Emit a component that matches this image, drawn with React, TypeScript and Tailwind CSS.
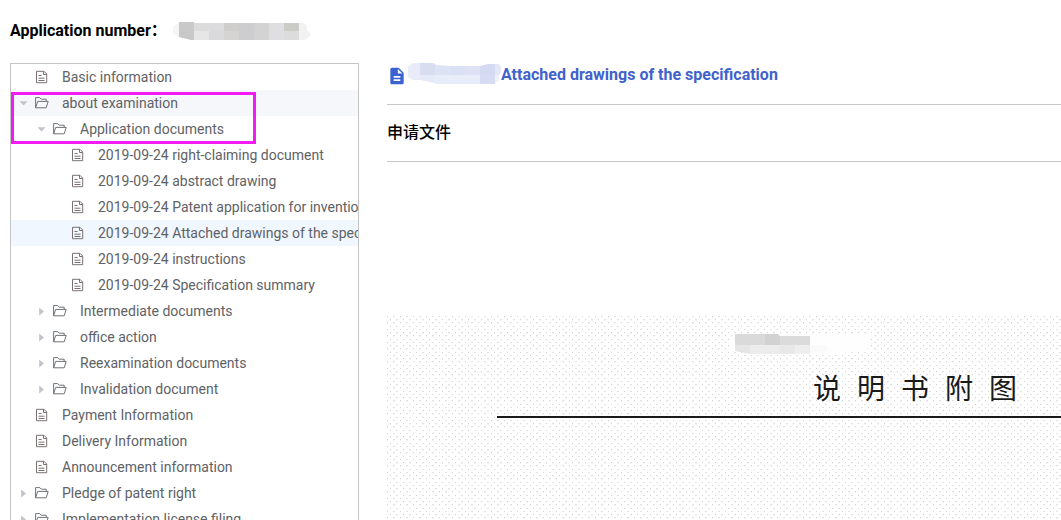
import clsx from "clsx";
import { useState } from "react";
import { MdDescription } from "react-icons/md";

interface TreeNode {
  id: string;
  label: string;
  children?: TreeNode[];
}

const TREE: TreeNode[] = [
  { id: "basic", label: "Basic information" },
  {
    id: "examination",
    label: "about examination",
    children: [
      {
        id: "application",
        label: "Application documents",
        children: [
          { id: "claims", label: "2019-09-24 right-claiming document" },
          { id: "abstract", label: "2019-09-24 abstract drawing" },
          { id: "patent", label: "2019-09-24 Patent application for invention" },
          {
            id: "drawings",
            label: "2019-09-24 Attached drawings of the specification",
          },
          { id: "instructions", label: "2019-09-24 instructions" },
          { id: "summary", label: "2019-09-24 Specification summary" },
        ],
      },
      { id: "intermediate", label: "Intermediate documents", children: [] },
      { id: "office", label: "office action", children: [] },
      { id: "reexamination", label: "Reexamination documents", children: [] },
      { id: "invalidation", label: "Invalidation document", children: [] },
    ],
  },
  { id: "payment", label: "Payment Information" },
  { id: "delivery", label: "Delivery Information" },
  { id: "announcement", label: "Announcement information" },
  { id: "pledge", label: "Pledge of patent right", children: [] },
  { id: "license", label: "Implementation license filing", children: [] },
];

const INDENTS = ["pl-0", "pl-[18px]", "pl-9"];

function DocumentIcon() {
  return (
    <svg
      viewBox="0 0 14 14"
      className="size-3.5 shrink-0"
      fill="none"
      stroke="#7a7072"
      aria-hidden="true"
    >
      <path d="M1.5 1.3H9L11.7 4V12.7H1.5Z" />
      <path d="M8.5 1.3V4.5H11.7M3.5 5.5H6.5M3.5 8.2H9.5M3.5 10.5H9.5" />
    </svg>
  );
}

function FolderIcon() {
  return (
    <svg
      viewBox="0 0 14 14"
      className="size-3.5 shrink-0"
      fill="none"
      stroke="#6f7378"
      strokeLinejoin="round"
      aria-hidden="true"
    >
      <path d="M0.6 11.8V1.6H4.8L6.3 3.2H11.2V5.4" />
      <path d="M0.6 11.8L2.7 5.4H13.2L11.2 11.8Z" />
    </svg>
  );
}

function Caret({ open }: { open: boolean }) {
  return (
    <svg viewBox="0 0 24 24" className="size-6 shrink-0" aria-hidden="true">
      <path
        d={open ? "M8.5 10.2H16.5L12.5 14.6Z" : "M10.2 8.5V16.5L15 12.5Z"}
        fill="#c0c4cc"
      />
    </svg>
  );
}

interface TreeItemProps {
  node: TreeNode;
  level: number;
  openIds: string[];
  selected: string;
  onPick: (node: TreeNode) => void;
}

function TreeItem({ node, level, openIds, selected, onPick }: TreeItemProps) {
  const open = openIds.includes(node.id);

  return (
    <li>
      <button
        type="button"
        onClick={() => onPick(node)}
        aria-expanded={node.children ? open : undefined}
        className={clsx(
          "flex h-[26px] w-full items-center whitespace-nowrap text-left text-sm text-[#606266]",
          level < 3 ? INDENTS[level] : "pl-[54px]",
          node.id === selected && "bg-[#f0f7ff]",
          node.id === "examination" && "bg-[#f5f7fa]",
        )}
      >
        {node.children ? (
          <Caret open={open} />
        ) : (
          <span className="w-6 shrink-0" />
        )}
        {node.children ? <FolderIcon /> : <DocumentIcon />}
        <span className="ml-[13px]">{node.label}</span>
      </button>
      {open && node.children && (
        <ul>
          {node.children.map((child) => (
            <TreeItem
              key={child.id}
              node={child}
              level={level + 1}
              openIds={openIds}
              selected={selected}
              onPick={onPick}
            />
          ))}
        </ul>
      )}
    </li>
  );
}

// Masked application number
function NumberMask() {
  const top = ["#c9c9c9", "#dcdcdc", "#dcdcde", "#cfcecd", "#cdccce", "#d3d2d2", "#dfdfe1", "#cbccc8"];
  const bottom = ["#c8c8c8", "#e7e6e7", "#dad9dc", "#d5d4d3", "#cdccce", "#d4d3d3", "#dfdee2", "#dcdcdc"];
  return (
    <svg viewBox="0 0 138 19" className="h-[19px] w-[138px]" aria-hidden="true">
      <path d="M7 0.5L1 5V12L7 15Z" fill="#f5f5f5" />
      <path d="M127 1H132L135 4V9L138 10V14L133 18H127Z" fill="#f1f2f2" />
      <clipPath id="number-mask">
        <path d="M7 0H22V1H127V18H19L7 15Z" />
      </clipPath>
      <g clipPath="url(#number-mask)">
        {top.map((fill, i) => (
          <rect key={i} x={7 + i * 15} y="0" width="15" height="9" fill={fill} />
        ))}
        {bottom.map((fill, i) => (
          <rect key={i} x={7 + i * 15} y="9" width="15" height="10" fill={fill} />
        ))}
      </g>
    </svg>
  );
}

function TitleMask() {
  return (
    <svg viewBox="-1 0 94 22" className="h-[22px] w-[94px]" aria-hidden="true">
      <path d="M12 0H5L0 4V14L5 17H12Z" fill="#e9ecf8" />
      <path d="M12 0H25L30 3V12H12Z" fill="#d8ddf2" />
      <path d="M27 2L42 3V12H27Z" fill="#dde2f5" />
      <path d="M42 3H57V12H42Z" fill="#d9e2f5" />
      <path d="M57 3H72V12H57Z" fill="#dfe2f5" />
      <path d="M72 3L80 1H87V12H72Z" fill="#d5daf3" />
      <path d="M87 1H91L94 5V9L91 12H87Z" fill="#e3e7f6" />
      <path d="M12 12H27V20L12 17Z" fill="#e6e9f7" />
      <path d="M27 12H72V21H27Z" fill="#e9edf9" />
      <path d="M72 12H87V21H72Z" fill="#d8dcf3" />
      <path d="M87 12H91V18L87 20Z" fill="#eef0fa" />
    </svg>
  );
}

function ScanMask() {
  return (
    <svg viewBox="0 0 143 20" className="h-5 w-[143px]" aria-hidden="true">
      <path d="M7 0L2 4V15L20 20H95L143 17V0Z" fill="#fefefe" />
      <path d="M7 0H37V11H7Z" fill="#dadada" />
      <path d="M37 0H50L52 2V11H37Z" fill="#d2d2d2" />
      <path d="M52 2H82V11H52Z" fill="#dbdbdb" />
      <path d="M7 11H22V20L7 17Z" fill="#e5e5e5" />
      <path d="M22 11H52V20H22Z" fill="#ececec" />
      <path d="M52 11H67V20H52Z" fill="#e8e8e8" />
      <path d="M67 11H82V20H67Z" fill="#eeeeee" />
      <path d="M82 11H98L100 16L96 19H82Z" fill="#fafafa" />
    </svg>
  );
}

// Halftone grain of the scanned sheet
function Halftone() {
  return (
    <svg className="absolute inset-0 size-full" aria-hidden="true">
      <pattern id="halftone" width="13" height="13" patternUnits="userSpaceOnUse">
        <path d="M0 0H1V1H0ZM3 3H4V4H3ZM0 6H1V7H0ZM3 10H4V11H3Z" fill="#d2d2d2" />
        <path d="M6 0H8V1H6ZM9 3H11V4H9ZM6 6H8V7H6ZM9 10H11V11H9Z" fill="#e2e2e2" />
        <path d="M3 4H4V5H3ZM9 4H11V5H9ZM0 7H1V8H0ZM6 7H8V8H6Z" fill="#f4f4f4" />
      </pattern>
      <rect width="100%" height="100%" fill="url(#halftone)" />
    </svg>
  );
}

export default function App() {
  const [openIds, setOpenIds] = useState(["examination", "application"]);
  const [selected, setSelected] = useState("drawings");

  const handlePick = (node: TreeNode) => {
    if (!node.children) {
      setSelected(node.id);
      return;
    }
    setOpenIds((prev) =>
      prev.includes(node.id)
        ? prev.filter((id) => id !== node.id)
        : [...prev, node.id],
    );
  };

  return (
    <div className="flex h-screen flex-col overflow-hidden bg-white pl-2.5 font-['Roboto','Noto_Sans_CJK_SC',sans-serif]">
      <header className="flex shrink-0 items-center pt-[19px] pb-5">
        <h1 className="w-[162px] whitespace-nowrap text-base font-bold text-black">
          Application number：
        </h1>
        <NumberMask />
      </header>

      <div className="flex min-h-0 flex-1 gap-7">
        <nav
          aria-label="Case files"
          className="relative w-[349px] shrink-0 overflow-hidden border border-b-0 border-[#c4c4c4]"
        >
          <ul>
            {TREE.map((node) => (
              <TreeItem
                key={node.id}
                node={node}
                level={0}
                openIds={openIds}
                selected={selected}
                onPick={handlePick}
              />
            ))}
          </ul>
          <div className="pointer-events-none absolute top-7 left-0 h-[52px] w-[245px] border-3 border-[#f21bf2]" />
        </nav>

        <main className="flex min-w-0 flex-1 flex-col">
          <div className="flex h-[42px] shrink-0 border-b border-[#c8c8c8]">
            <MdDescription className="mt-[3px] size-5 shrink-0 text-[#3a62d0]" />
            <TitleMask />
            <h2 className="whitespace-nowrap text-base leading-6 font-bold text-[#3f62cc]">
              Attached drawings of the specification
            </h2>
          </div>
          <h3 className="shrink-0 border-b border-[#c8c8c8] py-4 text-base leading-6 font-medium text-black">
            申请文件
          </h3>

          <section className="relative mt-[154px] flex-1 overflow-hidden">
            <Halftone />
            <div className="relative flex flex-col pt-[18px]">
              <div className="pl-[341px]">
                <ScanMask />
              </div>
              <div className="ml-[110px] border-b-2 border-[#1a1a1a] pt-4 pb-[6px] pl-[316px]">
                <p className="flex gap-4 text-[28px] leading-10 text-[#1a1a1a]">
                  {[..."说明书附图"].map((char) => (
                    <span key={char}>{char}</span>
                  ))}
                </p>
              </div>
            </div>
          </section>
        </main>
      </div>
    </div>
  );
}
